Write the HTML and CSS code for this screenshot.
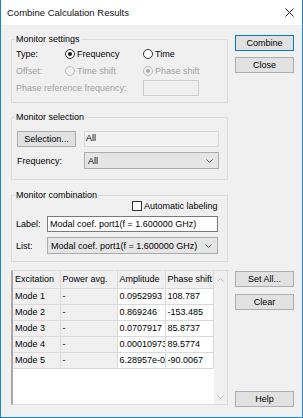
FILE: index.html
```html
<!DOCTYPE html>
<html lang="en">
<head>
    <meta charset="UTF-8">
    <title>Combine Calculation Results</title>
    <link rel="stylesheet" href="styles.css">
</head>
<body>
    <div class="window">
        <div class="titlebar">
            <span class="title">Combine Calculation Results</span>
            <svg class="close-x" width="9" height="9" viewBox="0 0 9 9">
                <path d="M0.5 0.5 L8.5 8.5 M8.5 0.5 L0.5 8.5" stroke="#222" stroke-width="1" fill="none"/>
            </svg>
        </div>

        <div class="content">
            <div class="groups">
                <fieldset class="group settings">
                    <legend>Monitor settings</legend>
                    <div class="settings-grid">
                        <span>Type:</span>
                        <span class="radio"><span class="dot checked"></span>Frequency</span>
                        <span class="radio"><span class="dot"></span>Time</span>

                        <span class="off">Offset:</span>
                        <span class="radio off"><span class="dot"></span>Time shift</span>
                        <span class="radio off"><span class="dot checked"></span>Phase shift</span>

                        <span class="off span-2">Phase reference frequency:</span>
                        <span class="textbox disabled"></span>
                    </div>
                </fieldset>

                <fieldset class="group selection">
                    <legend>Monitor selection</legend>
                    <div class="selection-grid">
                        <span class="btn">Selection...</span>
                        <span class="textbox readonly">All</span>
                        <span>Frequency:</span>
                        <span class="select">All
                            <svg class="chevron" width="7" height="4" viewBox="0 0 7 4"><path d="M0.5 0.5 L3.5 3.5 L6.5 0.5" stroke="#555" fill="none"/></svg>
                        </span>
                    </div>
                </fieldset>

                <fieldset class="group combination">
                    <legend>Monitor combination</legend>
                    <div class="check-row">
                        <span class="checkbox"></span>Automatic labeling
                    </div>
                    <div class="combination-grid">
                        <span>Label:</span>
                        <span class="textbox edit">Modal coef. port1(f = 1.600000 GHz)</span>
                        <span>List:</span>
                        <span class="select">Modal coef. port1(f = 1.600000 GHz)
                            <svg class="chevron" width="7" height="4" viewBox="0 0 7 4"><path d="M0.5 0.5 L3.5 3.5 L6.5 0.5" stroke="#555" fill="none"/></svg>
                        </span>
                    </div>
                </fieldset>
            </div>

            <div class="side-top">
                <span class="btn default">Combine</span>
                <span class="btn">Close</span>
            </div>

            <div class="results">
                <table class="results-table">
                    <colgroup>
                        <col class="c-exc">
                        <col class="c-pow">
                        <col class="c-amp">
                        <col class="c-pha">
                    </colgroup>
                    <thead>
                        <tr><th>Excitation</th><th>Power avg.</th><th>Amplitude</th><th>Phase shift</th></tr>
                    </thead>
                    <tbody>
                        <tr><td>Mode 1</td><td>-</td><td>0.0952993</td><td>108.787</td></tr>
                        <tr><td>Mode 2</td><td>-</td><td>0.869246</td><td>-153.485</td></tr>
                        <tr><td>Mode 3</td><td>-</td><td>0.0707917</td><td>85.8737</td></tr>
                        <tr><td>Mode 4</td><td>-</td><td>0.000109735</td><td>89.5774</td></tr>
                        <tr><td>Mode 5</td><td>-</td><td>6.28957e-05</td><td>-90.0067</td></tr>
                    </tbody>
                </table>
                <div class="scrollbar">
                    <svg width="7" height="4" viewBox="0 0 7 4"><path d="M0.5 3.5 L3.5 0.5 L6.5 3.5" stroke="#c2c2c2" fill="none"/></svg>
                    <svg width="7" height="4" viewBox="0 0 7 4"><path d="M0.5 0.5 L3.5 3.5 L6.5 0.5" stroke="#c2c2c2" fill="none"/></svg>
                </div>
            </div>

            <div class="side-bottom">
                <span class="btn">Set All...</span>
                <span class="btn">Clear</span>
                <span class="btn help">Help</span>
            </div>
        </div>
    </div>
</body>
</html>
```

FILE: styles.css
```css
* {
    margin: 0;
    padding: 0;
    box-sizing: border-box;
    font-family: 'Segoe UI', 'Liberation Sans', Arial, sans-serif;
}

body {
    width: 303px;
    height: 418px;
    overflow: hidden;
    background: #fff;
    font-size: 9px;
    color: #000;
}

.window {
    height: 418px;
    border: 1px solid #1883d7;
    border-top: none;
    background: #f0f0f0;
    display: flex;
    flex-direction: column;
}

.titlebar {
    height: 25px;
    flex: none;
    background: #fff;
    display: flex;
    align-items: center;
    justify-content: space-between;
    padding: 0 8px 0 6px;
}

.title {
    font-size: 9.5px;
    color: #111;
}

.content {
    flex: 1;
    display: grid;
    grid-template-columns: 217px 59px;
    grid-template-rows: auto 1fr;
    column-gap: 7px;
    padding: 0 8px 12px 10px;
}

/* group boxes */

.group {
    border: 1px solid #dcdcdc;
    padding: 0 8px 6px 4px;
}

.group legend {
    line-height: 12px;
    padding: 0 1px;
    margin-left: -1px;
}

.settings {
    margin-top: 8px;
}

.selection {
    margin-top: 8px;
    padding-bottom: 10px;
}

.combination {
    margin-top: 9px;
    padding-bottom: 7px;
}

.settings-grid {
    display: grid;
    grid-template-columns: 49px 78px 1fr;
    grid-auto-rows: 17px;
    align-items: center;
}

.span-2 {
    grid-column: span 2;
}

.off {
    color: #a0a0a0;
}

.radio {
    display: flex;
    align-items: center;
}

.dot {
    width: 10px;
    height: 10px;
    border: 1px solid #333;
    border-radius: 50%;
    background: #fff;
    margin-right: 2px;
    display: flex;
    align-items: center;
    justify-content: center;
}

.dot.checked::after {
    content: '';
    width: 4px;
    height: 4px;
    border-radius: 50%;
    background: #111;
}

.radio.off .dot {
    border-color: #bcbcbc;
    background: transparent;
}

.radio.off .dot.checked::after {
    background: #a8a8a8;
}

.textbox {
    height: 16px;
    display: flex;
    align-items: center;
    padding: 0 0 1px 2px;
    white-space: nowrap;
    overflow: hidden;
}

.textbox.disabled {
    width: 56px;
    border: 1px solid #cccccc;
    background: #f0f0f0;
}

.textbox.readonly {
    border: 1px solid #d9d9d9;
    background: #f2f2f2;
    padding-left: 1px;
    padding-bottom: 2px;
}

.textbox.edit {
    border: 1px solid #7a7a7a;
    background: #fff;
}

.select {
    height: 17px;
    border: 1px solid #acacac;
    background: #e5e5e5;
    display: flex;
    align-items: center;
    justify-content: space-between;
    padding: 0 5px 0 3px;
    white-space: nowrap;
}

.selection-grid {
    display: grid;
    grid-template-columns: 59px 1fr;
    grid-template-rows: 17px 17px;
    column-gap: 8px;
    row-gap: 5px;
    align-items: center;
    padding-top: 7px;
    margin-left: 1px;
}

.check-row {
    height: 10px;
    display: flex;
    align-items: center;
    margin-left: 116px;
}

.checkbox {
    width: 10px;
    height: 10px;
    border: 1px solid #333;
    background: #fff;
    margin-right: 2px;
}

.combination-grid {
    display: grid;
    grid-template-columns: 31px 171px;
    grid-template-rows: 16px 17px;
    row-gap: 5px;
    align-items: center;
    margin-top: 5px;
}

/* buttons */

.btn {
    height: 16px;
    border: 1px solid #adadad;
    background: #e1e1e1;
    display: flex;
    align-items: center;
    justify-content: center;
    white-space: nowrap;
}

.btn.default {
    border-color: #0078d7;
}

.side-top {
    display: flex;
    flex-direction: column;
    gap: 6px;
    padding-top: 10px;
}

.side-bottom {
    display: flex;
    flex-direction: column;
    gap: 7px;
    padding-top: 9px;
}

.help {
    margin-top: auto;
    margin-bottom: -2px;
}

/* results table */

.results {
    margin-top: 8px;
    display: flex;
    background: #fff;
    border: 1px solid #dcdcdc;
    border-left: 2px solid #a9a9a9;
}

.results-table {
    width: 200px;
    table-layout: fixed;
    border-collapse: collapse;
    align-self: flex-start;
}

.c-exc { width: 47px; }
.c-pow { width: 57px; }
.c-amp { width: 48px; }
.c-pha { width: 48px; }

.results-table th,
.results-table td {
    text-align: left;
    font-weight: normal;
    padding: 0 2px;
    white-space: nowrap;
    overflow: hidden;
    border-right: 1px solid #dadada;
    border-bottom: 1px solid #dadada;
}

.results-table th {
    height: 17px;
    background: #f0f0f0;
}

.results-table td {
    height: 16px;
    padding-bottom: 1px;
}

.results-table td:nth-child(1),
.results-table td:nth-child(2) {
    background: #f0f0f0;
}

.scrollbar {
    flex: 1;
    background: #f0f0f0;
    display: flex;
    flex-direction: column;
    justify-content: space-between;
    align-items: center;
    padding: 7px 0 5px;
}
```
